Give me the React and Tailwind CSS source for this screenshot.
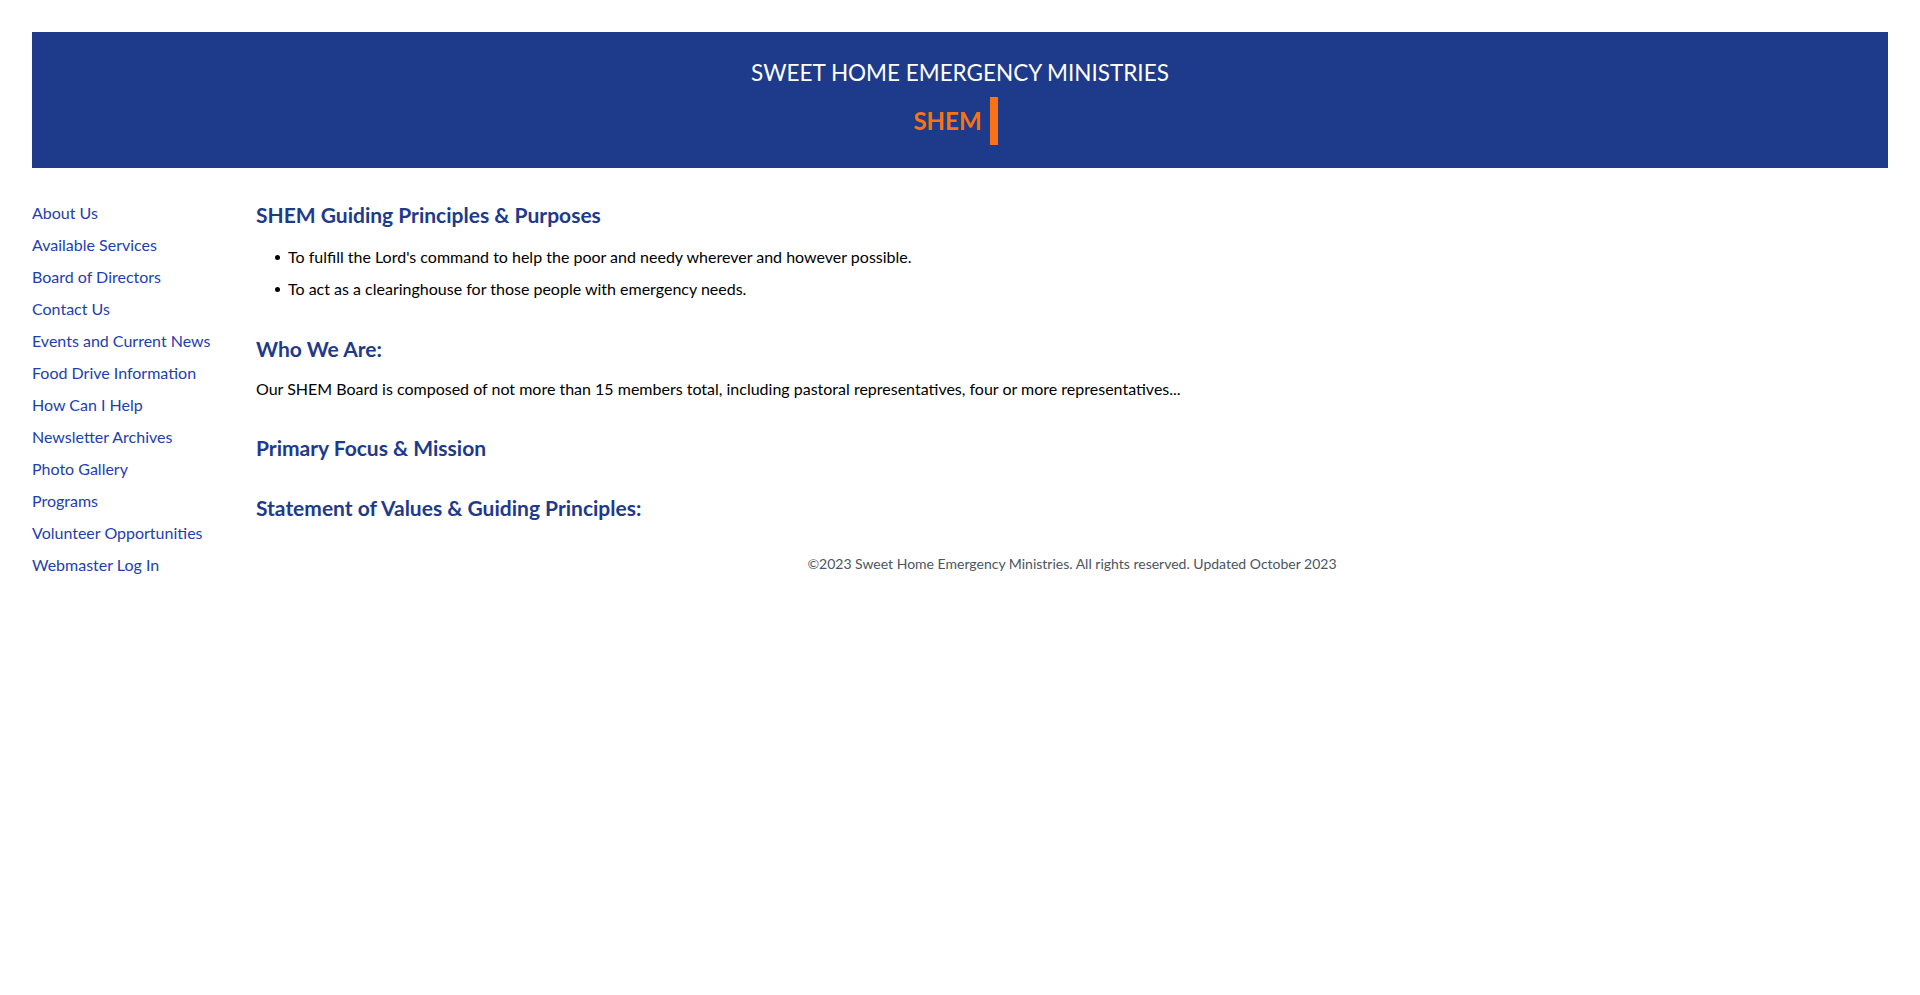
import React from "react";

const links = [
  "About Us",
  "Available Services",
  "Board of Directors",
  "Contact Us",
  "Events and Current News",
  "Food Drive Information",
  "How Can I Help",
  "Newsletter Archives",
  "Photo Gallery",
  "Programs",
  "Volunteer Opportunities",
  "Webmaster Log In",
];

export default function App() {
  return (
    <div className="min-h-screen bg-white p-8 font-['Segoe_UI','Lato','Noto_Sans',sans-serif] text-black">
      <header className="bg-[#1e3a8a] pt-[25px] pb-[23px] text-center">
        <h1 className="text-[22.5px] leading-8 font-normal text-white">SWEET HOME EMERGENCY MINISTRIES</h1>
        <div className="mt-2 flex justify-center">
          <span className="mr-[9px] border-r-8 border-[#f97316] pr-2 text-2xl leading-[48px] font-bold text-[#f97316]">
            SHEM
          </span>
        </div>
      </header>

      <div className="mt-[29px] flex">
        <nav className="w-56 shrink-0">
          <ul>
            {links.map((l) => (
              <li key={l}>
                <a href="#" className="block text-base leading-8 text-[#1e40af] hover:underline">
                  {l}
                </a>
              </li>
            ))}
          </ul>
        </nav>

        <main className="flex-1 pt-[2px]">
          <h2 className="text-[21px] leading-8 font-bold text-[#1e3a8a]">SHEM Guiding Principles &amp; Purposes</h2>
          <ul className="mt-[10px] pl-[19px] text-base leading-8">
            <li className="flex items-center gap-2">
              <span className="h-[5px] w-[5px] shrink-0 rounded-full bg-black"></span>
              To fulfill the Lord's command to help the poor and needy wherever and however possible.
            </li>
            <li className="flex items-center gap-2">
              <span className="h-[5px] w-[5px] shrink-0 rounded-full bg-black"></span>
              To act as a clearinghouse for those people with emergency needs.
            </li>
          </ul>

          <h2 className="mt-7 text-[21px] leading-8 font-bold text-[#1e3a8a]">Who We Are:</h2>
          <p className="mt-2 text-base leading-8">
            Our SHEM Board is composed of not more than 15 members total, including pastoral representatives, four or more representatives...
          </p>

          <h2 className="mt-[27px] text-[21px] leading-8 font-bold text-[#1e3a8a]">Primary Focus &amp; Mission</h2>

          <h2 className="mt-7 text-[21px] leading-8 font-bold text-[#1e3a8a]">Statement of Values &amp; Guiding Principles:</h2>

          <footer className="mt-[30px] text-center text-sm leading-5 text-[#4b5563]">
            ©2023 Sweet Home Emergency Ministries. All rights reserved. Updated October 2023
          </footer>
        </main>
      </div>
    </div>
  );
}
